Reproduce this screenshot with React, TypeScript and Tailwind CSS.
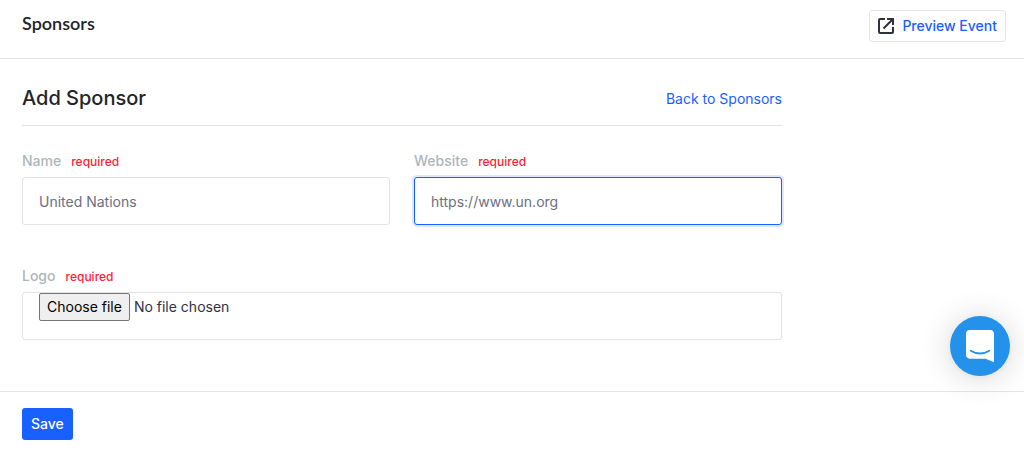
import { useState } from 'react'
import type { InputHTMLAttributes, ReactNode } from 'react'

const controlClass = 'block w-full h-12 px-4 text-sm bg-white border rounded-[3px]'

// Caption row above a control. Every field on this form is mandatory.
function FieldLabel({ htmlFor, children }: { htmlFor: string; children: ReactNode }) {
  return (
    <label htmlFor={htmlFor} className="flex items-baseline gap-2.5 mb-[5px] text-sm leading-5 font-medium text-[#adb5bd]">
      {children}
      <span className="text-xs leading-5 text-[#fa1e37]">required</span>
    </label>
  )
}

type TextFieldProps = InputHTMLAttributes<HTMLInputElement> & {
  id: string
  label: string
}

function TextField({ id, label, className = '', ...props }: TextFieldProps) {
  return (
    <div>
      <FieldLabel htmlFor={id}>{label}</FieldLabel>
      <input
        id={id}
        className={`${controlClass} outline-none placeholder:text-[#6b7080] placeholder:opacity-100 ${className}`}
        {...props}
      />
    </div>
  )
}

// The native input is hidden so the button caption is the same in every browser.
function FileField({ id, label }: { id: string; label: string }) {
  const [fileName, setFileName] = useState('No file chosen')

  return (
    <div>
      <FieldLabel htmlFor={id}>{label}</FieldLabel>
      <div className={`${controlClass} relative border-[#e2e3e8] text-[#2f3142] focus-within:border-[#1860ff]`}>
        <input
          id={id}
          type="file"
          className="sr-only"
          onChange={(e) => setFileName(e.target.files?.[0]?.name ?? 'No file chosen')}
        />
        <label htmlFor={id} className="flex items-center gap-1 h-7">
          <span className="flex items-center h-7 px-[7px] border border-[#767676] rounded-[2px] bg-[#efefef] text-black">
            Choose file
          </span>
          {fileName}
        </label>
      </div>
    </div>
  )
}

function ExternalIcon() {
  return (
    <svg aria-hidden viewBox="0 0 16 16" className="size-4" fill="none" stroke="#2f3142" strokeWidth="2">
      <path d="M7 1H2Q1 1 1 2V14Q1 15 2 15H14Q15 15 15 14V9" />
      <path d="M9 1H15V7M15 1L5.5 10.5" />
    </svg>
  )
}

function ChatLauncher() {
  return (
    <button
      type="button"
      aria-label="Open chat"
      className="fixed right-3.5 bottom-[77px] size-15 rounded-full bg-[#2491eb] flex items-center justify-center shadow-[0_1px_6px_rgba(0,0,0,0.06),0_2px_32px_rgba(0,0,0,0.16)]"
    >
      <svg aria-hidden viewBox="0 0 28 32" className="w-7 h-8">
        <path
          fill="#fff"
          d="M28 32s-4.714-1.855-8.527-3.34H3.437C1.54 28.66 0 27.026 0 25.013V3.644C0 1.633 1.54 0 3.437 0h21.125c1.898 0 3.437 1.632 3.437 3.645v18.404H28V32z"
        />
        <path d="M4.7 20.7Q14 26.3 23.3 20.7" fill="none" stroke="#2491eb" strokeWidth="1.8" strokeLinecap="round" />
      </svg>
    </button>
  )
}

export default function App() {
  return (
    <div className="min-h-screen bg-white font-['Inter',sans-serif] text-[#212529]">
      <header className="flex items-start justify-between pt-2.5 pb-4 pl-[22px] pr-[18px] border-b border-[#e5e5e7]">
        <h1 className="font-['Lato',sans-serif] text-lg leading-[26px] font-semibold">Sponsors</h1>
        <a
          href="#preview"
          className="flex items-center gap-2 h-8 px-2 border border-[#e5e5ea] rounded-[3px] text-sm font-medium text-[#1860ff]"
        >
          <ExternalIcon />
          Preview Event
        </a>
      </header>

      <form onSubmit={(e) => e.preventDefault()}>
        <div className="max-w-[782px] pl-[22px] pt-6 pb-[51px]">
          <div className="flex items-end justify-between pb-3 border-b border-[#e5e5e7]">
            <h2 className="text-xl leading-[30px] font-medium">Add Sponsor</h2>
            <a href="#sponsors" className="text-sm leading-7 text-[#1860ff]">
              Back to Sponsors
            </a>
          </div>

          <div className="grid grid-cols-2 gap-6 mt-[25px]">
            <TextField id="name" label="Name" type="text" placeholder="United Nations" className="border-[#e2e3e8]" />
            <TextField
              id="website"
              label="Website"
              type="url"
              placeholder="https://www.un.org"
              className="border-[#1860ff] shadow-[0_0_0_2px_rgba(24,96,255,0.15)]"
            />
          </div>

          <div className="mt-[41px]">
            <FileField id="logo" label="Logo" />
          </div>
        </div>

        <footer className="px-[22px] py-4 border-t border-[#e5e5e7]">
          <button type="submit" className="h-8 px-[9px] rounded-[3px] bg-[#1860ff] text-sm font-medium text-white">
            Save
          </button>
        </footer>
      </form>

      <ChatLauncher />
    </div>
  )
}
